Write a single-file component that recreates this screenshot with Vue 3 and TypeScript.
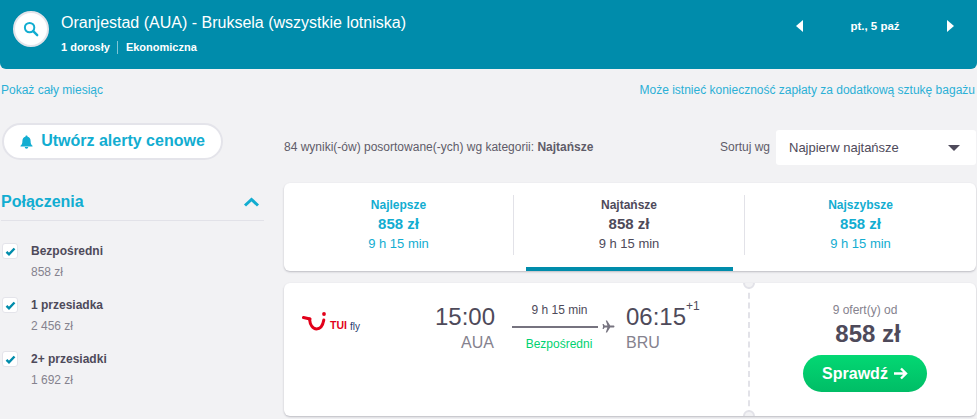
<script setup lang="ts">
interface StopFilter {
  label: string
  price: string
}

interface SortTab {
  title: string
  price: string
  time: string
  active: boolean
}

const stops: StopFilter[] = [
  { label: 'Bezpośredni', price: '858 zł' },
  { label: '1 przesiadka', price: '2 456 zł' },
  { label: '2+ przesiadki', price: '1 692 zł' },
]

const tabs: SortTab[] = [
  { title: 'Najlepsze', price: '858 zł', time: '9 h 15 min', active: false },
  { title: 'Najtańsze', price: '858 zł', time: '9 h 15 min', active: true },
  { title: 'Najszybsze', price: '858 zł', time: '9 h 15 min', active: false },
]
</script>

<template>
  <div class="page">
    <header class="top">
      <div class="top-left">
        <div class="search-circle">
          <svg width="16" height="16" viewBox="0 0 16 16" fill="none">
            <circle cx="6.6" cy="6.6" r="4.7" stroke="#12add1" stroke-width="2" />
            <path d="M10.2 10.2 14.2 14.2" stroke="#12add1" stroke-width="2.4" stroke-linecap="round" />
          </svg>
        </div>
        <div>
          <div class="route">Oranjestad (AUA) - Bruksela (wszystkie lotniska)</div>
          <div class="meta">
            <span class="meta-a">1 dorosły</span>
            <span>Ekonomiczna</span>
          </div>
        </div>
      </div>
      <div class="date-nav">
        <span class="arrow arrow-left"></span>
        <span class="date">pt., 5 paź</span>
        <span class="arrow arrow-right"></span>
      </div>
    </header>

    <div class="links">
      <a>Pokaż cały miesiąc</a>
      <a>Może istnieć konieczność zapłaty za dodatkową sztukę bagażu</a>
    </div>

    <div class="body">
      <aside class="side">
        <button class="alert-btn" type="button">
          <svg width="13" height="14" viewBox="0 0 13 14">
            <path d="M6.5 0.6c.7 0 1.1.5 1.1 1.1 2 .5 3 2 3 4.200 0 2.500.6 3.600 1.900 4.800v.8H.500v-.8c1.300-1.200 1.900-2.300 1.900-4.800 0-2.200 1-3.700 3-4.200 0-.6.400-1.100 1.100-1.100Z" fill="#12add1" />
            <path d="M4.800 12h3.400c0 1-.7 1.700-1.700 1.700S4.800 13 4.800 12Z" fill="#12add1" />
          </svg>
          <span class="alert-text">Utwórz alerty cenowe</span>
        </button>

        <div class="filter-head">
          <span>Połączenia</span>
          <svg width="17" height="10" viewBox="0 0 17 10" fill="none">
            <path d="M2 8.500 8.500 2.500 15 8.500" stroke="#12add1" stroke-width="3" />
          </svg>
        </div>

        <div class="filters">
          <div v-for="stop in stops" :key="stop.label" class="filter">
            <span class="check">
              <svg width="11" height="9" viewBox="0 0 11 9" fill="none">
                <path d="M1.500 4.800 4 7.300 9.500 1.500" stroke="#008cab" stroke-width="2.400" />
              </svg>
            </span>
            <div>
              <div class="filter-label">{{ stop.label }}</div>
              <div class="filter-price">{{ stop.price }}</div>
            </div>
          </div>
        </div>

        <div class="filter-next">Godziny odlotu</div>
      </aside>

      <main class="results">
        <div class="summary">
          <div>84 wyniki(-ów) posortowane(-ych) wg kategorii: <b>Najtańsze</b></div>
          <div class="sort">
            <span>Sortuj wg</span>
            <div class="select">
              <span>Najpierw najtańsze</span>
              <i class="caret"></i>
            </div>
          </div>
        </div>

        <div class="tabs">
          <div v-for="tab in tabs" :key="tab.title" class="tab" :class="{ active: tab.active }">
            <div class="tab-inner">
              <div class="tab-title">{{ tab.title }}</div>
              <div class="tab-price">{{ tab.price }}</div>
              <div class="tab-time">{{ tab.time }}</div>
            </div>
          </div>
        </div>

        <div class="flight">
          <div class="flight-main">
            <div class="airline">
              <svg width="24" height="20" viewBox="0 0 24 20" fill="none">
                <path d="M1.500 5.500 8 7" stroke="#e2001a" stroke-width="3" stroke-linecap="round" />
                <path d="M7.500 7c.6 6 3.300 10 7 10 3.700 0 6.300-3.500 7.300-9" stroke="#e2001a" stroke-width="3" stroke-linecap="round" />
                <circle cx="22" cy="2" r="1.900" fill="#e2001a" />
              </svg>
              <span class="tui">TUI</span>
              <span class="fly">fly</span>
            </div>
            <div class="point point-from">
              <div class="clock">15:00</div>
              <div class="code">AUA</div>
            </div>
            <div class="leg">
              <div class="leg-time">9 h 15 min</div>
              <div class="leg-line">
                <span class="line"></span>
                <svg width="13" height="13" viewBox="0 0 24 24">
                  <path d="M23 12c0-1.100-1-1.800-2.200-1.800h-5.700L9.300 1H7l3 9.200H5L3 7.500H1l1 4.500-1 4.500h2L5 13.800h5L7 23h2.300l5.800-9.200h5.700C22 13.800 23 13.100 23 12Z" fill="#76737f" />
                </svg>
              </div>
              <div class="leg-type">Bezpośredni</div>
            </div>
            <div class="point">
              <div class="clock">06:15<sup>+1</sup></div>
              <div class="code">BRU</div>
            </div>
          </div>
          <div class="offer">
            <div class="offer-count">9 ofert(y) od</div>
            <div class="offer-price">858 zł</div>
            <button class="check-btn" type="button">
              Sprawdź
              <svg width="15" height="13" viewBox="0 0 15 13" fill="none">
                <path d="M1 6.500H13M8 1.500l5 5-5 5" stroke="#fff" stroke-width="2.400" />
              </svg>
            </button>
          </div>
        </div>
      </main>
    </div>
  </div>
</template>

<style scoped>
.page {
  width: 977px;
  height: 419px;
  overflow: hidden;
  background: #f2f2f4;
  font-family: "Liberation Sans", Arial, sans-serif;
  color: #4e4a5a;
}

.top {
  height: 69px;
  box-sizing: border-box;
  background: #008cab;
  border-radius: 0 0 6px 6px;
  display: flex;
  justify-content: space-between;
  color: #fff;
  padding: 11px 23px 0 13px;
}

.top-left {
  display: flex;
  gap: 12px;
}

.search-circle {
  width: 36px;
  height: 36px;
  box-sizing: border-box;
  border-radius: 50%;
  background: #fff;
  border: 2px solid #e4e4ea;
  display: flex;
  align-items: center;
  justify-content: center;
}

.route {
  font-size: 16px;
  line-height: 24px;
}

.meta {
  display: flex;
  font-size: 11px;
  font-weight: bold;
  line-height: 13px;
  margin-top: 6px;
}

.meta-a {
  border-right: 1px solid #7fc5d5;
  padding-right: 7px;
  margin-right: 8px;
}

.date-nav {
  display: flex;
  align-items: center;
  height: 30px;
  font-size: 11.5px;
  font-weight: bold;
}

.date {
  width: 144px;
  text-align: center;
}

.arrow {
  width: 0;
  height: 0;
  border-top: 6.5px solid transparent;
  border-bottom: 6.5px solid transparent;
}

.arrow-left {
  border-right: 7px solid #fff;
}

.arrow-right {
  border-left: 7px solid #fff;
}

.links {
  display: flex;
  justify-content: space-between;
  padding: 14px 2px 0 1px;
  font-size: 12px;
  line-height: 14px;
  color: #2bb0d6;
}

.body {
  display: flex;
  padding-top: 26px;
}

.side {
  width: 264px;
  flex: none;
  margin-right: 20px;
  padding-left: 2px;
  box-sizing: border-box;
}

.alert-btn {
  width: 221px;
  height: 37px;
  box-sizing: border-box;
  background: #fff;
  border: 2px solid #e4e4ea;
  border-radius: 19px;
  color: #12add1;
  font: bold 16px "Liberation Sans", Arial, sans-serif;
  display: flex;
  align-items: center;
  justify-content: center;
  gap: 8px;
  padding: 0;
}

.alert-text {
  margin-top: -2px;
}

.filter-head {
  display: flex;
  justify-content: space-between;
  align-items: center;
  margin: 30px 0 0 -1px;
  padding: 1px 4px 7px 0;
  border-bottom: 1px solid #e2e2e8;
  color: #12add1;
  font-size: 16px;
  font-weight: bold;
  line-height: 22px;
}

.filters {
  padding-top: 22px;
  display: flex;
  flex-direction: column;
  gap: 18px;
}

.filter {
  display: flex;
  gap: 13px;
}

.check {
  width: 16px;
  height: 16px;
  box-sizing: border-box;
  background: #fff;
  border: 1px solid #e4e4ea;
  border-radius: 3px;
  display: flex;
  align-items: center;
  justify-content: center;
  flex: none;
}

.filter-label {
  font-size: 12px;
  font-weight: bold;
  line-height: 16px;
}

.filter-price {
  font-size: 12px;
  line-height: 14px;
  margin-top: 6px;
  color: #85828e;
}

.filter-next {
  margin: 29px 0 0 -1px;
  font-size: 16px;
  font-weight: bold;
  color: #12add1;
  line-height: 22px;
}

.results {
  width: 692px;
  flex: none;
}

.summary {
  display: flex;
  justify-content: space-between;
  align-items: center;
  height: 36px;
  font-size: 12px;
  margin-top: 6px;
  color: #5f5c69;
}

.sort {
  display: flex;
  align-items: center;
  gap: 6px;
  font-size: 12px;
}

.select {
  width: 200px;
  height: 35px;
  box-sizing: border-box;
  background: #fff;
  border-radius: 3px;
  display: flex;
  align-items: center;
  justify-content: space-between;
  padding: 0 16px 0 13px;
  font-size: 13px;
  color: #4e4a5a;
}

.caret {
  width: 0;
  height: 0;
  margin-top: 2px;
  border-left: 6px solid transparent;
  border-right: 6px solid transparent;
  border-top: 6px solid #4e4a5a;
}

.tabs {
  display: grid;
  grid-template-columns: 229px 231px 232px;
  height: 88px;
  margin-top: 18px;
  background: #fff;
  border-radius: 6px;
  box-shadow: 0 1px 2px rgba(60, 60, 80, 0.3);
  overflow: hidden;
}

.tab {
  position: relative;
  padding-top: 12px;
  color: #12add1;
  text-align: center;
}

.tab-inner {
  height: 60px;
  border-left: 1px solid #e2e2e8;
  padding-top: 2px;
  box-sizing: border-box;
}

.tab:first-child .tab-inner {
  border-left: 0;
}

.tab.active {
  color: #4e4a5a;
}

.tab.active::after {
  content: "";
  position: absolute;
  left: 13px;
  right: 11px;
  bottom: 0;
  height: 4px;
  background: #008cab;
}

.tab-title {
  font-size: 12px;
  font-weight: bold;
  line-height: 16px;
}

.tab-price {
  font-size: 15px;
  font-weight: bold;
  line-height: 22px;
}

.tab-time {
  font-size: 13px;
  line-height: 18px;
}

.flight {
  display: flex;
  height: 133px;
  margin-top: 12px;
  background: #fff;
  border-radius: 6px;
  box-shadow: 0 1px 2px rgba(60, 60, 80, 0.3);
  overflow: hidden;
}

.flight-main {
  position: relative;
  width: 464px;
  flex: none;
  display: flex;
  align-items: flex-start;
  padding: 18px 0 0 18px;
  box-sizing: border-box;
}

.flight-main::before,
.flight-main::after {
  content: "";
  position: absolute;
  right: -7px;
  width: 12px;
  height: 12px;
  box-sizing: border-box;
  border-radius: 50%;
  background: #f2f2f4;
  border: 2px solid #e2e2e8;
  z-index: 1;
}

.flight-main::before {
  top: -6px;
}

.flight-main::after {
  bottom: -6px;
}

.airline {
  width: 133px;
  flex: none;
  display: flex;
  align-items: flex-end;
  margin-top: 11px;
  gap: 2px;
}

.airline svg {
  margin-right: 2px;
}

.tui {
  color: #e2001a;
  font-size: 10.5px;
  font-weight: bold;
  line-height: 11px;
  margin-bottom: 1px;
}

.fly {
  color: #1f3c6e;
  font-size: 10px;
  line-height: 11px;
  margin-left: 1px;
}

.point {
  width: 70px;
}

.point-from {
  text-align: right;
  width: 59px;
}

.clock {
  font-size: 24px;
  line-height: 30px;
  white-space: nowrap;
  margin-top: 1px;
}

.clock sup {
  font-size: 12px;
  line-height: 0;
  vertical-align: 15px;
}

.code {
  font-size: 16px;
  line-height: 20px;
  color: #85828e;
  margin-top: 1px;
}

.leg {
  width: 107px;
  margin: 0 7px 0 18px;
  padding-top: 2px;
}

.leg-time {
  font-size: 12px;
  line-height: 14px;
  text-align: center;
  width: 95px;
}

.leg-line {
  display: flex;
  align-items: center;
  gap: 4px;
  height: 13px;
  margin-top: 3px;
}

.line {
  width: 86px;
  height: 2px;
  background: #76737f;
}

.leg-type {
  font-size: 12px;
  line-height: 14px;
  color: #00d170;
  text-align: center;
  width: 94px;
  margin-top: 4px;
}

.offer {
  flex: 1;
  border-left: 2px dashed #e2e2e8;
  display: flex;
  flex-direction: column;
  align-items: center;
  padding: 20px 0 0 4px;
  box-sizing: border-box;
}

.offer-count {
  font-size: 12px;
  line-height: 14px;
  color: #85828e;
}

.offer-price {
  font-size: 24px;
  font-weight: bold;
  line-height: 30px;
  margin: 2px 0 0 6px;
}

.check-btn {
  width: 124px;
  height: 37px;
  margin-top: 6px;
  border: 0;
  border-radius: 19px;
  background: linear-gradient(#03d873, #00bd66);
  color: #fff;
  font: bold 16px "Liberation Sans", Arial, sans-serif;
  display: flex;
  align-items: center;
  justify-content: center;
  gap: 5px;
  padding: 0;
}
</style>

<style>
html,
body {
  background: #f2f2f4;
}
</style>
